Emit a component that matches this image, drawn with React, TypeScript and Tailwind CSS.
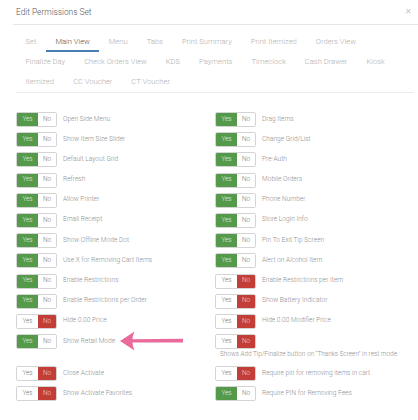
import React from "react";

type Cell = { label?: string; on: boolean; note?: string };

const tabs = [
  "Set",
  "Main View",
  "Menu",
  "Tabs",
  "Print Summary",
  "Print Itemized",
  "Orders View",
  "Finalize Day",
  "Check Orders View",
  "KDS",
  "Payments",
  "Timeclock",
  "Cash Drawer",
  "Kiosk",
  "Itemized",
  "CC Voucher",
  "CT Voucher",
];

const rows: [Cell, Cell][] = [
  [{ label: "Open Side Menu", on: true }, { label: "Drag Items", on: true }],
  [{ label: "Show Item Size Slider", on: true }, { label: "Change Grid/List", on: true }],
  [{ label: "Default Layout Grid", on: true }, { label: "Pre-Auth", on: true }],
  [{ label: "Refresh", on: true }, { label: "Mobile Orders", on: true }],
  [{ label: "Allow Printer", on: true }, { label: "Phone Number", on: true }],
  [{ label: "Email Receipt", on: true }, { label: "Store Login Info", on: true }],
  [{ label: "Show Offline Mode Dot", on: true }, { label: "Pin To Exit Tip Screen", on: true }],
  [{ label: "Use X for Removing Cart Items", on: true }, { label: "Alert on Alcohol Item", on: true }],
  [{ label: "Enable Restrictions", on: true }, { label: "Enable Restrictions per Item", on: false }],
  [{ label: "Enable Restrictions per Order", on: true }, { label: "Show Battery Indicator", on: false }],
  [{ label: "Hide 0.00 Price", on: false }, { label: "Hide 0.00 Modifier Price", on: false }],
  [
    { label: "Show Retail Mode", on: true },
    { on: false, note: "Shows Add Tip/Finalize button on \u201cThanks Screen\u201d in rest mode." },
  ],
  [{ label: "Close Activate", on: false }, { label: "Require pin for removing items in cart", on: false }],
  [{ label: "Show Activate Favorites", on: false }, { label: "Require PIN for Removing Fees", on: true }],
];

function Toggle({ on }: { on: boolean }) {
  return (
    <div className="flex h-[15px] w-[41px] shrink-0 overflow-hidden rounded-[2px] border border-[#d4d4d4] text-[6.4px] font-light">
      <div
        className={
          on
            ? "flex w-[21px] items-center justify-center bg-[#55994b] text-[#e4f0e1]"
            : "flex w-[21px] items-center justify-center bg-white text-[#777]"
        }
      >
        Yes
      </div>
      <div
        className={
          on
            ? "flex flex-1 items-center justify-center bg-white text-[#777]"
            : "flex flex-1 items-center justify-center bg-[#c23e36] text-[#f3d9d7]"
        }
      >
        No
      </div>
    </div>
  );
}

function Item({ cell }: { cell: Cell }) {
  return (
    <div className="flex flex-col">
      <div className="flex items-center gap-[6px]">
        <Toggle on={cell.on} />
        {cell.label && (
          <span className="whitespace-nowrap text-[6.6px] font-light text-[#8f8f8f]">{cell.label}</span>
        )}
      </div>
      {cell.note && (
        <div className="ml-[5px] h-[11.8px] whitespace-nowrap text-[6.4px] font-light leading-[11.8px] text-[#8f8f8f]">
          {cell.note}
        </div>
      )}
    </div>
  );
}

export default function App() {
  return (
    <div className="relative h-[420px] w-[418px] overflow-hidden bg-white" style={{ fontFamily: "Roboto, sans-serif" }}>
      <div className="ml-[13px] flex h-[25px] items-center justify-between border-b border-[#e6e6e6] pl-[3px] pr-[6px]">
        <span className="text-[8.4px] font-light text-[#555]">Edit Permissions Set</span>
        <span className="text-[8px] leading-none text-[#c4c4c4]">&#x2715;</span>
      </div>

      <div className="ml-4 mr-[4px] mt-[7px] flex flex-wrap border-b border-[#ececec]">
        {tabs.map((t) => (
          <div
            key={t}
            className={
              t === "Main View"
                ? "flex h-[20px] items-center border-b-2 border-[#4a7db3] px-[9.5px] pt-[2px] text-[7.6px] font-light text-[#555]"
                : "flex h-[20px] items-center px-[9.5px] text-[7.6px] font-light text-[#b0b0b0]"
            }
          >
            {t}
          </div>
        ))}
      </div>

      <div className="mt-[19px] grid grid-cols-[199px_1fr] items-start gap-y-[5.2px] pl-4">
        {rows.map(([l, r], i) => (
          <React.Fragment key={i}>
            <Item cell={l} />
            <Item cell={r} />
          </React.Fragment>
        ))}
      </div>

      <svg className="absolute left-0 top-0" width="418" height="420" viewBox="0 0 418 420">
        <path
          d="M120 341 L134.5 331.5 Q132.5 336 132.5 339.3 L183 338.8 L183 342.6 L132.5 342.6 Q132.5 346.5 134.5 350.5 Z"
          fill="#ea6b9b"
        />
      </svg>
    </div>
  );
}
